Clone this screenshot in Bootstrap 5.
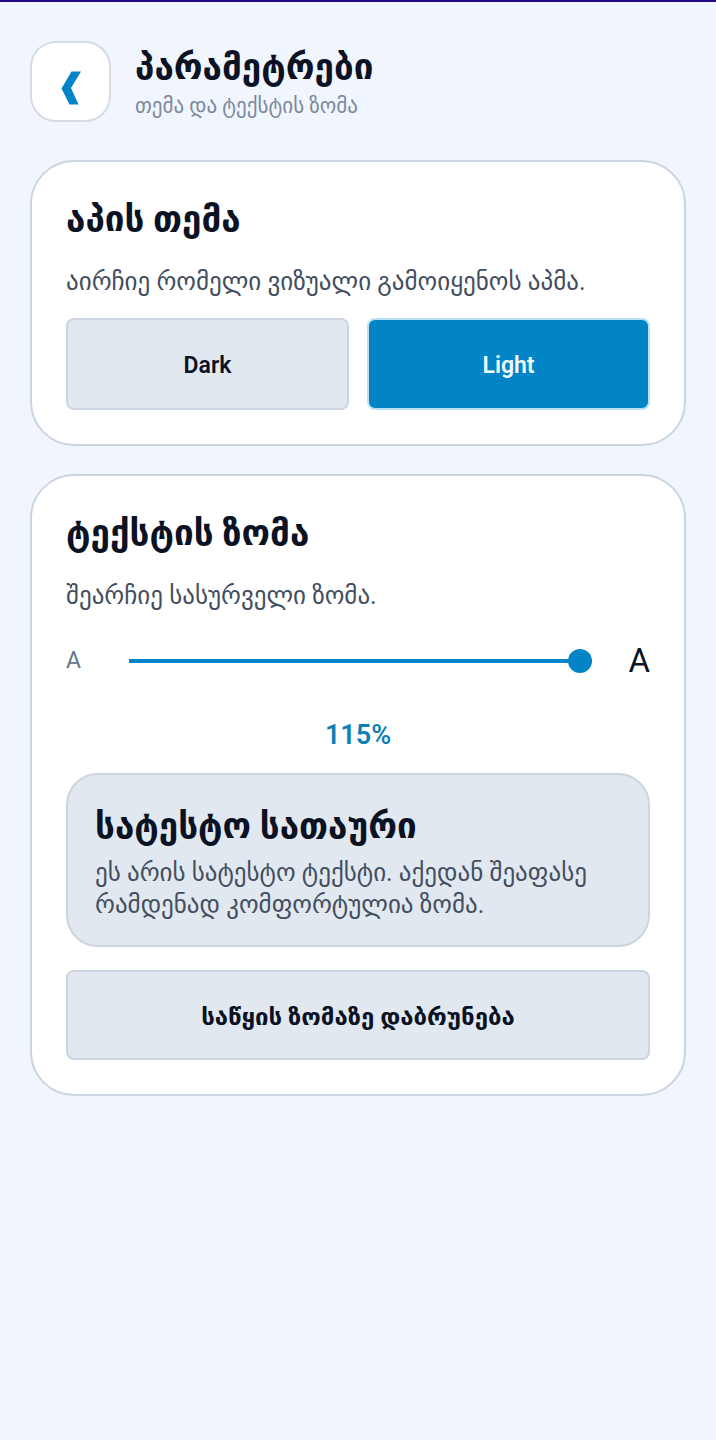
<!DOCTYPE html>
<html lang="ka">
<head>
  <meta charset="UTF-8" />
  <meta name="viewport" content="width=device-width, initial-scale=1.0" />
  <title>პარამეტრები</title>
  <link href="https://cdn.jsdelivr.net/npm/bootstrap@5.3.3/dist/css/bootstrap.min.css" rel="stylesheet">
  <style>
    body {
      min-height: 100vh;
      background-color: #f1f5fd;
      border-top: 2px solid #220a82;
      color: #0b1224;
      font-family: Roboto, "DejaVu Sans", sans-serif;
    }

    .page {
      padding: 39px 30px;
    }

    .page-header {
      gap: 24px;
      margin-bottom: 38px;
    }

    .back-btn {
      width: 81px;
      height: 81px;
      padding: 12px 0 0;
      border: 2px solid #d5dce6;
      border-radius: 26px;
      background-color: #fff;
    }

    .page-title,
    .panel-title {
      font-size: 35px;
      line-height: 48px;
      font-weight: 700;
    }

    .page-subtitle {
      font-size: 21px;
      line-height: 28px;
      color: #7c899c;
    }

    .panel {
      padding: 34px;
      margin-bottom: 28px;
      border: 2px solid #cbd5e1;
      border-radius: 44px;
      background-color: #fff;
    }

    .panel-title {
      margin-bottom: 22px;
    }

    .panel-text {
      margin-bottom: 20px;
      font-size: 25px;
      line-height: 32px;
      color: #434e60;
    }

    .theme-options {
      gap: 18px;
    }

    .btn-option {
      height: 92px;
      border: 2px solid #cbd5e1;
      border-radius: 8px;
      background-color: #e2e8f0;
      color: #0b1224;
      font-size: 23px;
      font-weight: 600;
      padding: 4px 12px 0;
    }

    .btn-option.active {
      border-color: #bae0f5;
      background-color: #0284c7;
      color: #f1fbff;
    }

    .btn-reset {
      height: 90px;
      font-size: 24px;
    }

    .zoom-row {
      height: 40px;
      margin: 29px 0 36px;
    }

    .zoom-small {
      font-size: 23px;
      color: #64748b;
    }

    .zoom-large {
      font-size: 33px;
    }

    .zoom-range {
      margin: 0 36px 0 48px;
    }

    .zoom-range::-webkit-slider-runnable-track {
      height: 4px;
      border-radius: 0;
      background-color: #0284c7;
    }

    .zoom-range::-webkit-slider-thumb {
      width: 24px;
      height: 24px;
      margin-top: -10px;
      background-color: #0284c7;
    }

    .zoom-value {
      margin-bottom: 20px;
      font-size: 27px;
      line-height: 36px;
      font-weight: 600;
      color: #0e7fb5;
    }

    .preview {
      padding: 28px 27px 24px;
      margin-bottom: 23px;
      border: 2px solid #cbd5e1;
      border-radius: 32px;
      background-color: #e2e8f0;
    }

    .preview .panel-title {
      margin-bottom: 6px;
    }
  </style>
</head>
<body>
  <main class="page">
    <header class="page-header d-flex align-items-center">
      <button type="button" class="back-btn d-flex align-items-center justify-content-center flex-shrink-0" aria-label="უკან">
        <svg width="20" height="34" viewBox="0 0 20 34" fill="#0284c7" aria-hidden="true">
          <path d="M10.500 0.500H20L10 17L17.500 33.500H8.500L0.500 17.500Z" />
        </svg>
      </button>
      <div>
        <h1 class="page-title mb-0">პარამეტრები</h1>
        <p class="page-subtitle mb-0">თემა და ტექსტის ზომა</p>
      </div>
    </header>

    <section class="panel">
      <h2 class="panel-title">აპის თემა</h2>
      <p class="panel-text">აირჩიე რომელი ვიზუალი გამოიყენოს აპმა.</p>
      <div class="theme-options d-flex">
        <button type="button" class="btn btn-option flex-fill w-50" data-theme="dark">Dark</button>
        <button type="button" class="btn btn-option flex-fill w-50 active" data-theme="light">Light</button>
      </div>
    </section>

    <section class="panel">
      <h2 class="panel-title">ტექსტის ზომა</h2>
      <p class="panel-text mb-0"><label for="zoom">შეარჩიე სასურველი ზომა.</label></p>
      <div class="zoom-row d-flex align-items-center">
        <span class="zoom-small">A</span>
        <input type="range" class="form-range zoom-range" id="zoom" min="85" max="115" step="5" value="115">
        <span class="zoom-large">A</span>
      </div>
      <div class="zoom-value text-center" id="zoomValue">115%</div>
      <div class="preview">
        <h3 class="panel-title">სატესტო სათაური</h3>
        <p class="panel-text mb-0">ეს არის სატესტო ტექსტი. აქედან შეაფასე რამდენად კომფორტულია ზომა.</p>
      </div>
      <button type="button" class="btn btn-option btn-reset w-100" id="zoomReset">საწყის ზომაზე დაბრუნება</button>
    </section>
  </main>

  <script src="https://cdn.jsdelivr.net/npm/bootstrap@5.3.3/dist/js/bootstrap.bundle.min.js"></script>
  <script>
    const zoom = document.getElementById('zoom');
    const zoomValue = document.getElementById('zoomValue');

    zoom.addEventListener('input', () => {
      zoomValue.textContent = zoom.value + '%';
    });

    document.getElementById('zoomReset').addEventListener('click', () => {
      zoom.value = 100;
      zoomValue.textContent = '100%';
    });

    const themeButtons = document.querySelectorAll('[data-theme]');
    themeButtons.forEach((btn) => {
      btn.addEventListener('click', () => {
        themeButtons.forEach((b) => b.classList.toggle('active', b === btn));
      });
    });
  </script>
</body>
</html>
